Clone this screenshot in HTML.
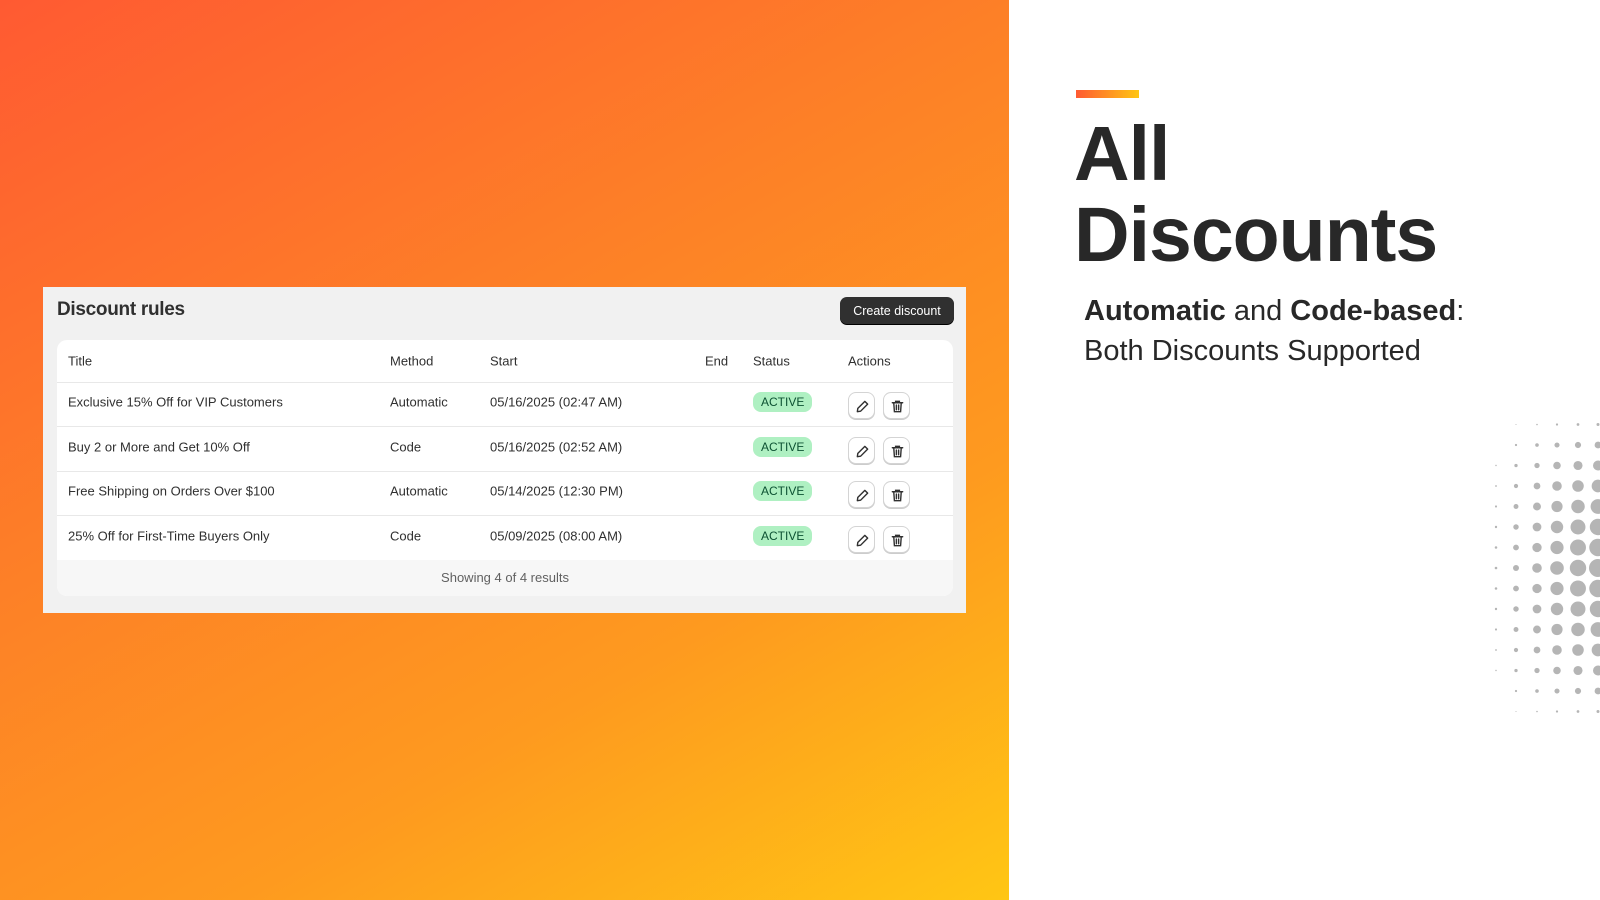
<!DOCTYPE html>
<html><head><meta charset="utf-8"><style>
*{margin:0;padding:0;box-sizing:border-box}
body{width:1600px;height:900px;overflow:hidden;background:#fff;font-family:"Liberation Sans",sans-serif;position:relative}
#bg{position:absolute;left:0;top:0;width:1009px;height:900px;background:linear-gradient(150deg,#ff5a32 0%,#fd8027 40%,#fe9a1f 70%,#ffc614 100%)}
#card{position:absolute;left:43px;top:287px;width:923px;height:326px;background:#f1f1f1}
#card h2{position:absolute;left:14px;top:12px;font-size:19px;font-weight:bold;color:#303030;letter-spacing:-0.3px}
#btn{position:absolute;left:797px;top:10px;width:114px;height:27px;background:#303030;color:#fff;border-radius:7px;font-size:12.5px;text-align:center;line-height:28px;box-shadow:0 1px 0 #000}
#tbl{position:absolute;left:14px;top:53px;width:896px;height:256px;background:#fff;border-radius:10px;overflow:hidden}
.row{position:absolute;left:0;width:896px;height:44px;border-bottom:1px solid #e8e8e8;font-size:13px;color:#303030}
.row span{position:absolute;top:50%;transform:translateY(-50%);margin-top:-3px}
.hd{top:0;height:43px}
.hd span{margin-top:0}
.c1{left:11px}.c2{left:333px}.c3{left:433px}.c4{left:648px}.c5{left:696px}.c6{left:791px}
.badge{background:#aff0c2;color:#0c5132;font-size:12px;padding:3px 8px;border-radius:8px}
.ab{position:absolute;top:50%;margin-top:-13px;width:27px;height:27px;border:1px solid #d4d4d4;border-radius:8px;background:#fff;box-shadow:0 1px 0 #ccc}
.ab svg{position:absolute;left:6px;top:6px}
#foot{position:absolute;left:0;top:220px;width:896px;height:36px;background:#f7f7f7;text-align:center;line-height:36px;font-size:13px;color:#616161}
#acc{position:absolute;left:1076px;top:90px;width:63px;height:8px;background:linear-gradient(90deg,#ff5a32,#ffc614)}
#h1{position:absolute;left:1074px;top:114px;font-size:77px;line-height:81px;font-weight:bold;color:#282828;letter-spacing:-1px}
#sub{position:absolute;left:1084px;top:291px;font-size:29px;line-height:40px;color:#282828}
</style></head><body>
<div id="bg"></div>
<div id="card">
<h2>Discount rules</h2>
<div id="btn">Create discount</div>
<div id="tbl">
<div class="row hd"><span class="c1">Title</span><span class="c2">Method</span><span class="c3">Start</span><span class="c4">End</span><span class="c5">Status</span><span class="c6">Actions</span></div>
<div class="row" style="top:43px"><span class="c1">Exclusive 15% Off for VIP Customers</span><span class="c2">Automatic</span><span class="c3">05/16/2025 (02:47 AM)</span><span class="c5 badge">ACTIVE</span><i class="ab" style="left:791px"></i><i class="ab" style="left:826px"></i></div>
<div class="row" style="top:88px"><span class="c1">Buy 2 or More and Get 10% Off</span><span class="c2">Code</span><span class="c3">05/16/2025 (02:52 AM)</span><span class="c5 badge">ACTIVE</span><i class="ab" style="left:791px"></i><i class="ab" style="left:826px"></i></div>
<div class="row" style="top:132px"><span class="c1">Free Shipping on Orders Over $100</span><span class="c2">Automatic</span><span class="c3">05/14/2025 (12:30 PM)</span><span class="c5 badge">ACTIVE</span><i class="ab" style="left:791px"></i><i class="ab" style="left:826px"></i></div>
<div class="row" style="top:177px"><span class="c1">25% Off for First-Time Buyers Only</span><span class="c2">Code</span><span class="c3">05/09/2025 (08:00 AM)</span><span class="c5 badge">ACTIVE</span><i class="ab" style="left:791px"></i><i class="ab" style="left:826px"></i></div>
<div id="foot">Showing 4 of 4 results</div>
</div>
</div>
<div id="acc"></div>
<div id="h1">All<br>Discounts</div>
<div id="sub"><b>Automatic</b> and <b>Code-based</b>:<br>Both Discounts Supported</div>
<svg id="dots" width="1600" height="900" style="position:absolute;left:0;top:0"></svg>
<script>
var abs=document.querySelectorAll('.ab');
var pen='<svg width="15" height="15" viewBox="0 0 16 16" fill="none" stroke="#303030" stroke-width="1.5" stroke-linejoin="round"><path d="M10.5 2.5l3 3L6 13l-3.5.5L3 10z"/></svg>';
var bin='<svg width="15" height="15" viewBox="0 0 16 16" fill="none" stroke="#303030" stroke-width="1.5" stroke-linecap="round"><path d="M2.5 4h11M6 4V2.5h4V4M4 4l.7 9.5h6.6L12 4M6.8 6.5v5M9.2 6.5v5"/></svg>';
abs.forEach(function(a,i){a.innerHTML=i%2?bin:pen;});
var cols=[[1496,1.3],[1516,3.0],[1537,4.8],[1557,6.8],[1578,8.2],[1598,9]];
var s='';
for(var k=-7;k<=7;k++){var dy=k*20.5;var f=1-0.8*Math.pow(dy/150,2)-0.1*Math.abs(k)/7;
cols.forEach(function(c){var r=c[1]*f;if(r>0.5)s+='<circle cx="'+c[0]+'" cy="'+(568+dy)+'" r="'+r.toFixed(2)+'" fill="#b5b5b5"/>';});}
document.getElementById('dots').innerHTML=s;
</script>
</body></html>
